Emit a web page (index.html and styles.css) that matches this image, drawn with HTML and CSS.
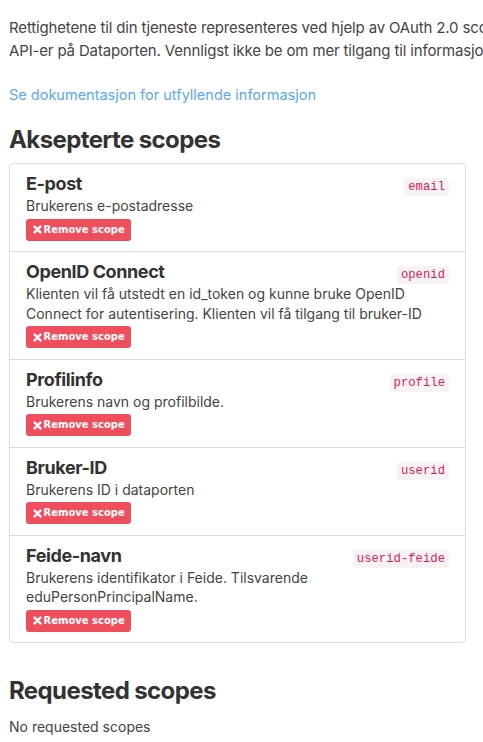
FILE: index.html
```html
<!DOCTYPE html>
<html lang="no">
<head>
<meta charset="utf-8">
<link rel="stylesheet" href="styles.css">
</head>
<body>
<main class="page">
  <p class="intro"><span class="line">Rettighetene til din tjeneste representeres ved hjelp av OAuth 2.0 scopes. Dette gir tilgang til</span><br><span class="line">API-er på Dataporten. Vennligst ikke be om mer tilgang til informasjon enn du trenger.</span></p>
  <p class="doclink"><a href="#">Se dokumentasjon for utfyllende informasjon</a></p>

  <h2 class="section-title">Aksepterte scopes</h2>
  <ul class="scope-list">
    <li class="scope">
      <div class="scope-head"><h5 class="scope-title">E-post</h5><code class="scope-code">email</code></div>
      <p class="scope-desc">Brukerens e-postadresse</p>
      <button class="remove-btn"><svg class="x" viewBox="0 0 9 9" aria-hidden="true"><path d="M1.6 1.6 L7.4 7.4 M7.4 1.6 L1.6 7.4"/></svg>Remove scope</button>
    </li>
    <li class="scope">
      <div class="scope-head"><h5 class="scope-title">OpenID Connect</h5><code class="scope-code">openid</code></div>
      <p class="scope-desc">Klienten vil få utstedt en id_token og kunne bruke OpenID Connect for autentisering. Klienten vil få tilgang til bruker-ID</p>
      <button class="remove-btn"><svg class="x" viewBox="0 0 9 9" aria-hidden="true"><path d="M1.6 1.6 L7.4 7.4 M7.4 1.6 L1.6 7.4"/></svg>Remove scope</button>
    </li>
    <li class="scope">
      <div class="scope-head"><h5 class="scope-title">Profilinfo</h5><code class="scope-code">profile</code></div>
      <p class="scope-desc">Brukerens navn og profilbilde.</p>
      <button class="remove-btn"><svg class="x" viewBox="0 0 9 9" aria-hidden="true"><path d="M1.6 1.6 L7.4 7.4 M7.4 1.6 L1.6 7.4"/></svg>Remove scope</button>
    </li>
    <li class="scope">
      <div class="scope-head"><h5 class="scope-title">Bruker-ID</h5><code class="scope-code">userid</code></div>
      <p class="scope-desc">Brukerens ID i dataporten</p>
      <button class="remove-btn"><svg class="x" viewBox="0 0 9 9" aria-hidden="true"><path d="M1.6 1.6 L7.4 7.4 M7.4 1.6 L1.6 7.4"/></svg>Remove scope</button>
    </li>
    <li class="scope">
      <div class="scope-head"><h5 class="scope-title">Feide-navn</h5><code class="scope-code">userid-feide</code></div>
      <p class="scope-desc">Brukerens identifikator i Feide. Tilsvarende eduPersonPrincipalName.</p>
      <button class="remove-btn"><svg class="x" viewBox="0 0 9 9" aria-hidden="true"><path d="M1.6 1.6 L7.4 7.4 M7.4 1.6 L1.6 7.4"/></svg>Remove scope</button>
    </li>
  </ul>

  <h2 class="section-title requested">Requested scopes</h2>
  <p class="empty">No requested scopes</p>
</main>
</body>
</html>
```
FILE: styles.css
```css
html, body {
  margin: 0;
  padding: 0;
  overflow: hidden;
  background: #fff;
}
body {
  font-family: Inter, "Noto Sans", sans-serif;
  color: #444;
  font-size: 14px;
}
.page {
  padding: 0 9px;
  width: 457px;
}
.intro {
  margin: 17px 0 0;
  font-size: 15px;
  line-height: 22.5px;
  letter-spacing: -0.15px;
  white-space: nowrap;
}
.doclink {
  margin: 22px 0 0;
  font-size: 14.5px;
  line-height: 21px;
}
.doclink a {
  color: #5aa8f2;
  text-decoration: none;
}
.section-title {
  margin: 20px 0 0;
  font-size: 24px;
  line-height: 30px;
  font-weight: 700;
  letter-spacing: -0.6px;
  color: #333;
}
.scope-list {
  list-style: none;
  margin: 8px 0 0;
  padding: 0;
  border: 1px solid #ddd;
  border-radius: 4px;
}
.scope {
  padding: 7px 16px 10.5px;
  border-top: 1px solid #ddd;
}
.scope:first-child {
  border-top: 0;
}
.scope-head {
  display: flex;
  justify-content: space-between;
  align-items: flex-start;
  height: 25px;
}
.scope-title {
  margin: 0;
  font-size: 18px;
  line-height: 25px;
  font-weight: 700;
  letter-spacing: -0.4px;
  color: #333;
}
.scope-code {
  margin-top: 7px;
  font-family: "Liberation Mono", monospace;
  font-size: 12.25px;
  line-height: 18px;
  padding: 0 4px;
  border-radius: 4px;
  background: #f9f2f4;
  color: #d6245a;
}
.scope-desc {
  margin: 0;
  font-size: 14px;
  line-height: 19.5px;
}
.remove-btn {
  display: flex;
  align-items: center;
  gap: 2px;
  margin-top: 3px;
  height: 22px;
  padding: 0 6px 0 6.5px;
  border: 0;
  border-radius: 3px;
  background: #ef4f5c;
  color: #fff;
  font-family: "DejaVu Sans", sans-serif;
  font-size: 10px;
  font-weight: 700;
  line-height: 22px;
  white-space: nowrap;
}
.remove-btn .x {
  width: 9px;
  height: 9px;
  stroke: #fff;
  stroke-width: 2.4;
  stroke-linecap: round;
  fill: none;
}
.requested {
  margin-top: 33px;
}
.empty {
  margin: 11px 0 0;
  font-size: 14px;
  line-height: 20px;
}
```
